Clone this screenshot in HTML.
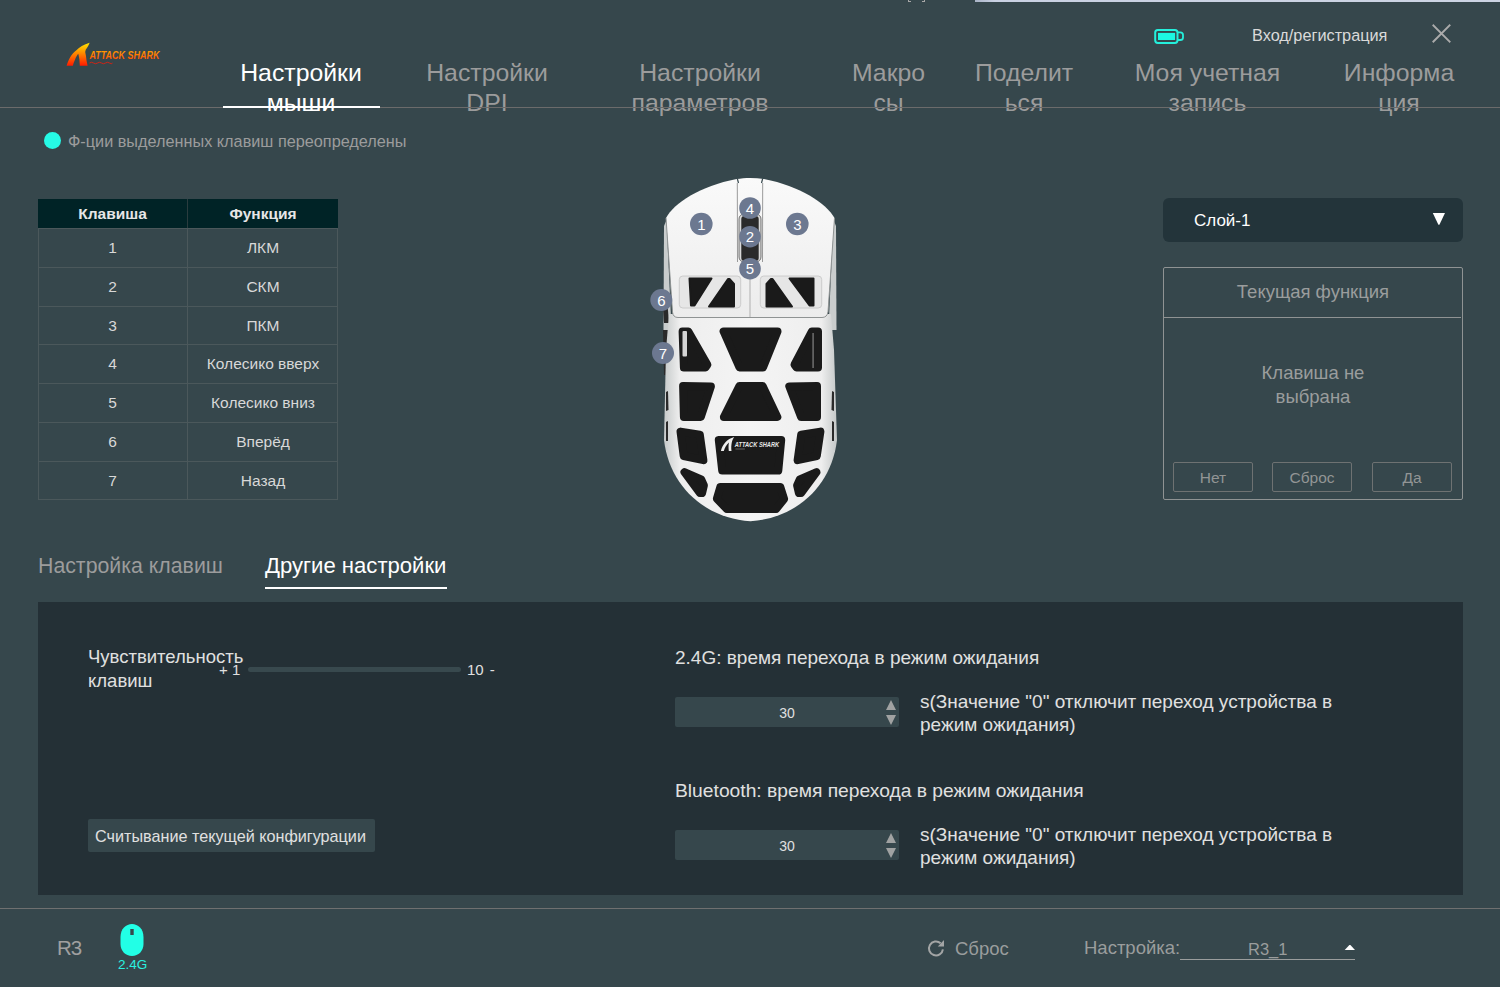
<!DOCTYPE html>
<html><head><meta charset="utf-8">
<style>
*{margin:0;padding:0;box-sizing:border-box}
html,body{width:1500px;height:987px;overflow:hidden;background:#36474c;font-family:"Liberation Sans",sans-serif}
.a{position:absolute;white-space:nowrap}
.tab{position:absolute;font-size:24.8px;line-height:29.4px;text-align:center;color:#9c9c9c;width:240px;white-space:nowrap}
.tab.on{color:#fff}
.th{height:29px;line-height:29px;text-align:center;color:#e6e6e6;font-weight:700;font-size:15.5px}
.td{text-align:center;color:#d8d8d8;font-size:15.5px}
.btn{position:absolute;border:1px solid #6e7272;border-radius:2px;width:80px;height:30px;color:#929595;font-size:15.5px;text-align:center;line-height:30px}
</style></head><body>
<!-- top strip -->
<div class="a" style="left:975px;top:0;width:525px;height:2px;background:linear-gradient(90deg,#a9b3c6 0,#c9d1e2 20px,#cdd4e3 100%)"></div>
<div class="a" style="left:908px;top:0;width:1px;height:2px;background:#a8a8a8"></div>
<div class="a" style="left:908px;top:1px;width:3px;height:1px;background:#a8a8a8"></div>
<div class="a" style="left:924px;top:0;width:1px;height:2px;background:#a8a8a8"></div>
<div class="a" style="left:922px;top:1px;width:3px;height:1px;background:#a8a8a8"></div>

<!-- logo -->
<svg class="a" style="left:60px;top:38px" width="110" height="32" viewBox="60 38 110 32">
 <defs><linearGradient id="lg" x1="0" y1="0" x2="0" y2="1"><stop offset="0" stop-color="#ffe600"/><stop offset="1" stop-color="#ff1a00"/></linearGradient>
 <linearGradient id="lg2" x1="0" y1="0" x2="0" y2="1"><stop offset="0" stop-color="#ffb000"/><stop offset="1" stop-color="#ff4a00"/></linearGradient></defs>
 <path d="M66.6,65.8 C68,60 72,53 76.1,50.4 C79,47.5 84,44.5 89.6,42.8 C88.8,45 87.5,47.5 85.7,49.7 L85.2,52 L85.9,55.5 C86.2,59 86.8,62.5 87.6,65.8 L79.8,65.8 L79.4,59.5 C79,57 78.6,55 78.2,53.8 C77,55.5 75.8,57.5 75.2,59.2 L73.8,62.6 L72.8,65.8 Z" fill="url(#lg)"/>
 <text x="89.5" y="58.5" font-family="Liberation Sans" font-weight="700" font-style="italic" font-size="11" fill="url(#lg2)" textLength="70" lengthAdjust="spacingAndGlyphs">ATTACK SHARK</text>
 <path d="M89.5,63 q2,-1.5 4,0 t4,0 t4,0 t4,0 t4,0 t3,0" stroke="#e02010" stroke-width="0.9" fill="none"/>
</svg>

<!-- nav tabs -->
<div class="tab on" style="left:181px;top:58.3px">Настройки<br>мыши</div>
<div class="tab" style="left:367px;top:58.3px">Настройки<br>DPI</div>
<div class="tab" style="left:580px;top:58.3px">Настройки<br>параметров</div>
<div class="tab" style="left:768.5px;top:58.3px">Макро<br>сы</div>
<div class="tab" style="left:904px;top:58.3px">Поделит<br>ься</div>
<div class="tab" style="left:1087.5px;top:58.3px">Моя учетная<br>запись</div>
<div class="tab" style="left:1279px;top:58.3px">Информа<br>ция</div>
<div class="a" style="left:0;top:107px;width:1500px;height:1px;background:#6b6b6b"></div>
<div class="a" style="left:223px;top:106px;width:157px;height:2px;background:#fff"></div>

<!-- battery / login / close -->
<svg class="a" style="left:1152px;top:27px" width="34" height="20" viewBox="0 0 34 20">
 <rect x="3.2" y="2.9" width="22.3" height="13" rx="2.6" fill="none" stroke="#24f0dc" stroke-width="2"/>
 <rect x="6" y="5.9" width="17.1" height="7.1" fill="#1cf8e2"/>
 <path d="M25.5,5.3 L28.3,5.3 Q31,5.3 31,8 L31,10.4 Q31,13 28.3,13 L25.5,13" stroke="#24f0dc" stroke-width="1.8" fill="none"/>
</svg>
<div class="a" style="left:1252px;top:27px;font-size:16.3px;line-height:16px;color:#dadada">Вход/регистрация</div>
<svg class="a" style="left:1430px;top:22px" width="24" height="24" viewBox="0 0 24 24">
 <path d="M3.4,3.4 L19.6,19.6 M19.6,3.4 L3.4,19.6" stroke="#ababab" stroke-width="1.9" stroke-linecap="square"/>
</svg>

<!-- indicator -->
<div class="a" style="left:44px;top:132px;width:17px;height:17px;border-radius:50%;background:#26fae6"></div>
<div class="a" style="left:68px;top:133px;font-size:16.25px;line-height:16px;color:#9c9c9c">Ф-ции выделенных клавиш переопределены</div>

<!-- table -->
<div class="a" style="left:38px;top:199px;width:300px;height:29px;background:#002326"></div>
<div class="a" style="left:187px;top:199px;width:1px;height:29px;background:#2a3c3e"></div>
<div class="a th" style="left:38px;top:199px;width:149px">Клавиша</div>
<div class="a th" style="left:188px;top:199px;width:150px">Функция</div>
<div class="a" style="left:38px;top:228px;width:300px;height:1px;background:#4b585b"></div>
<div class="a" style="left:38px;top:267px;width:300px;height:1px;background:#4b585b"></div>
<div class="a" style="left:38px;top:306px;width:300px;height:1px;background:#4b585b"></div>
<div class="a" style="left:38px;top:344px;width:300px;height:1px;background:#4b585b"></div>
<div class="a" style="left:38px;top:383px;width:300px;height:1px;background:#4b585b"></div>
<div class="a" style="left:38px;top:422px;width:300px;height:1px;background:#4b585b"></div>
<div class="a" style="left:38px;top:461px;width:300px;height:1px;background:#4b585b"></div>
<div class="a" style="left:38px;top:499px;width:300px;height:1px;background:#4b585b"></div>
<div class="a" style="left:38px;top:228px;width:1px;height:272px;background:#4b585b"></div>
<div class="a" style="left:187px;top:228px;width:1px;height:272px;background:#4b585b"></div>
<div class="a" style="left:337px;top:228px;width:1px;height:272px;background:#4b585b"></div>
<div class="a td" style="left:38px;top:229px;width:149px;height:38px;line-height:38px">1</div>
<div class="a td" style="left:188px;top:229px;width:150px;height:38px;line-height:38px">ЛКМ</div>
<div class="a td" style="left:38px;top:268px;width:149px;height:38px;line-height:38px">2</div>
<div class="a td" style="left:188px;top:268px;width:150px;height:38px;line-height:38px">СКМ</div>
<div class="a td" style="left:38px;top:307px;width:149px;height:37px;line-height:37px">3</div>
<div class="a td" style="left:188px;top:307px;width:150px;height:37px;line-height:37px">ПКМ</div>
<div class="a td" style="left:38px;top:345px;width:149px;height:38px;line-height:38px">4</div>
<div class="a td" style="left:188px;top:345px;width:150px;height:38px;line-height:38px">Колесико вверх</div>
<div class="a td" style="left:38px;top:384px;width:149px;height:38px;line-height:38px">5</div>
<div class="a td" style="left:188px;top:384px;width:150px;height:38px;line-height:38px">Колесико вниз</div>
<div class="a td" style="left:38px;top:423px;width:149px;height:38px;line-height:38px">6</div>
<div class="a td" style="left:188px;top:423px;width:150px;height:38px;line-height:38px">Вперёд</div>
<div class="a td" style="left:38px;top:462px;width:149px;height:37px;line-height:37px">7</div>
<div class="a td" style="left:188px;top:462px;width:150px;height:37px;line-height:37px">Назад</div>

<!-- MOUSE -->
<svg class="a" style="left:640px;top:170px" width="220" height="360" viewBox="640 170 220 360">
 <defs>
  <linearGradient id="mg" x1="0" y1="0" x2="1" y2="0">
   <stop offset="0" stop-color="#c6caca"/><stop offset="0.09" stop-color="#eeeeee"/><stop offset="0.5" stop-color="#f4f4f4"/><stop offset="0.91" stop-color="#eeeeee"/><stop offset="1" stop-color="#c4c8c8"/>
  </linearGradient>
  <linearGradient id="bg1" x1="0" y1="0" x2="0" y2="1">
   <stop offset="0" stop-color="#fafafa"/><stop offset="1" stop-color="#ececec"/>
  </linearGradient>
 </defs>
 <!-- side strips -->
 <path d="M664,226 L666.5,220 L671,318 L668,330 L663.5,330 Z" fill="#c9cdcd"/>
 <path d="M836,226 L833.5,220 L829,318 L832,330 L836.5,330 Z" fill="#c9cdcd"/>
 <!-- side buttons dark -->
 <path d="M662.5,300 L667,298 L669,323 L664,323 Z" fill="#2a2a2a"/>
 <path d="M663,330 L668,330 L668,375 L664,375 Z" fill="#2a2a2a"/>
 <!-- lower shell -->
 <path d="M669,314 L831,314 L834,350 L837,440 C831.6,485.4 797.3,518 750.5,521.3 C703.7,518 669.4,485.4 664,440 L666,350 Z" fill="url(#mg)"/>
 <!-- buttons -->
 <path d="M666,218 C674,203 700,186 736.7,179 C745,177.5 755,177.5 764,179 C800,186 826,203 834.5,218 L828,312 Q827,317.5 822,317.5 L678,317.5 Q673,317.5 672.5,312 Z" fill="url(#bg1)"/>
 <path d="M666,218 L672.5,312 Q673,317.5 678,317.5 L822,317.5 Q827,317.5 828,312 L834.5,218" stroke="#8f9393" stroke-width="1" fill="none"/>
 <path d="M737.3,178.5 L738.5,183 M762.7,178.5 L761.5,183" stroke="#36474c" stroke-width="1.2"/>
 <!-- wheel channel -->
 <path d="M737.3,183 L737.5,262 M762.7,183 L762.5,262" stroke="#9a9a9a" stroke-width="1" fill="none"/>
 <rect x="739" y="214" width="22" height="48" rx="5" fill="#d8d8d8" stroke="#555" stroke-width="0.8"/>
 <rect x="741.3" y="216" width="17.4" height="45" rx="3" fill="#2a2a2a"/>
 <path d="M750,272 L750,317" stroke="#a8a8a8" stroke-width="0.9"/>
 <!-- button holes -->
 <rect x="679.3" y="276" width="61.4" height="32" rx="3.5" fill="#e6e6e6" stroke="#c4c4c4" stroke-width="0.8"/>
 <rect x="760.3" y="276" width="61.4" height="32" rx="3.5" fill="#e6e6e6" stroke="#c4c4c4" stroke-width="0.8"/>
 <g fill="#1a1a1a" stroke="#1a1a1a" stroke-width="2" stroke-linejoin="round">
  <path d="M689.5,278.5 L711.5,278.5 L694.5,305.5 L691,305.5 Z"/>
  <path d="M728,279 L729.5,279 L734,284 L734,306.5 L709,306.5 Z"/>
  <path d="M771,279 L772.5,279 L792,306.5 L766.5,306.5 L766.5,284 Z"/>
  <path d="M789.5,278.5 L813.5,278.5 L813.5,305.5 L809.5,305.5 Z"/>
 </g>
 <!-- lower holes -->
 <g fill="#1a1a1a" stroke="#1a1a1a" stroke-width="8.0" stroke-linejoin="round">
  <path d="M682.6,331.5 L688.3,331.5 L707.4,364.8 L705.5,367.5 L683.9,367.5 Z"/>
  <path d="M723.6,331.5 L777.5,331.5 L763.0,367.5 L739.5,367.5 Z"/>
  <path d="M811.8,331.5 L818.0,331.5 L818.0,367.5 L796.5,367.5 L794.5,364.7 Z"/>
  <path d="M683.1,386.0 L710.9,386.4 L700.8,417.0 L683.9,417.0 Z"/>
  <path d="M739.4,386.0 L762.6,386.0 L777.3,417.0 L723.9,417.0 Z"/>
  <path d="M789.3,386.4 L817.0,386.0 L817.0,417.0 L801.1,417.0 Z"/>
  <path d="M680.5,431.6 L699.8,434.6 L703.4,460.2 L683.7,456.0 Z"/>
  <path d="M718.8,440.0 L781.2,440.0 L778.3,470.5 L722.2,470.5 Z"/>
  <path d="M801.2,434.6 L820.4,431.6 L816.8,456.0 L797.6,460.2 Z"/>
  <path d="M684.5,472.1 L701.2,479.3 L703.9,485.3 L702.1,493.0 L700.0,493.0 Z"/>
  <path d="M720.3,487.0 L780.3,487.0 L784.1,498.9 L776.1,509.0 L726.8,509.0 L716.9,498.7 Z"/>
  <path d="M799.8,479.3 L816.5,472.1 L801.0,493.0 L798.9,493.0 L797.1,485.3 Z"/>
 </g>
 <rect x="682.5" y="331" width="4.5" height="25.5" rx="1" fill="#d4d4d4"/>
 <rect x="812.3" y="333" width="1.6" height="35" fill="#6a6a6a"/>
 <g fill="#2a2a2a">
  <path d="M666,392 L668,391 L668.5,410 L666,411 Z"/>
  <path d="M666,422 L668,421 L668,441 L666,441 Z"/>
  <path d="M834,392 L832,391 L831.5,410 L834,411 Z"/>
  <path d="M834,422 L832,421 L832,441 L834,441 Z"/>
 </g>
 <!-- logo on plate -->
 <path d="M720.9,451 C722.5,444.5 727,439 734.2,437.1 C732,440 730.8,445 731.5,451 L728.8,451 C728.5,448 728.3,445 729,442.5 C726.5,444.5 724.8,447.5 723.8,451 Z" fill="#eeeeee"/>
 <text x="734.8" y="446.6" font-family="Liberation Sans" font-weight="700" font-style="italic" font-size="7.5" fill="#e6e6e6" textLength="44.3" lengthAdjust="spacingAndGlyphs">ATTACK SHARK</text>
 <rect x="735.4" y="448.6" width="9.5" height="0.8" fill="#777"/>
 <!-- badges -->
 <g fill="#6c7890">
  <circle cx="701.3" cy="224" r="11.3"/>
  <circle cx="797.3" cy="224" r="11.3"/>
  <circle cx="750" cy="208" r="10.8"/>
  <circle cx="750" cy="236.7" r="10.8"/>
  <circle cx="750" cy="268.7" r="10.8"/>
  <circle cx="661.3" cy="300" r="11"/>
  <circle cx="663" cy="353" r="11"/>
 </g>
 <g font-family="Liberation Sans" font-size="15" fill="#fff" text-anchor="middle">
  <text x="701.3" y="229.5">1</text>
  <text x="797.3" y="229.5">3</text>
  <text x="750" y="213.5">4</text>
  <text x="750" y="242.2">2</text>
  <text x="750" y="274.2">5</text>
  <text x="661.3" y="305.5">6</text>
  <text x="663" y="358.5">7</text>
 </g>
</svg>
<!-- layer dropdown -->
<div class="a" style="left:1163px;top:198px;width:300px;height:44px;border-radius:6px;background:#23343a"></div>
<div class="a" style="left:1194px;top:211.5px;font-size:17px;line-height:17px;color:#fff">Слой-1</div>
<svg class="a" style="left:1432px;top:212px" width="14" height="14" viewBox="0 0 14 14"><path d="M0.8,1 L13,1 L7.4,12.7 L6.4,12.7 Z" fill="#fff"/></svg>

<!-- current function box -->
<div class="a" style="left:1163px;top:267px;width:300px;height:233px;border:1px solid #8f9393;border-radius:2px"></div>
<div class="a" style="left:1164px;top:317px;width:297px;height:1px;background:#8f9393"></div>
<div class="a" style="left:1163px;top:283px;width:300px;text-align:center;font-size:18.5px;line-height:18.5px;color:#9a9d9d">Текущая функция</div>
<div class="a" style="left:1163px;top:361px;width:300px;text-align:center;font-size:18.5px;line-height:23.5px;color:#9a9d9d;white-space:normal">Клавиша не<br>выбрана</div>
<div class="btn" style="left:1173px;top:462px">Нет</div>
<div class="btn" style="left:1272px;top:462px">Сброс</div>
<div class="btn" style="left:1372px;top:462px">Да</div>

<!-- sub tabs -->
<div class="a" style="left:38px;top:556px;font-size:21.3px;line-height:21.3px;color:#9c9c9c">Настройка клавиш</div>
<div class="a" style="left:265px;top:555px;font-size:22.1px;line-height:21.3px;color:#fff">Другие настройки</div>
<div class="a" style="left:265px;top:587px;width:182px;height:2px;background:#fff"></div>

<!-- panel -->
<div class="a" style="left:38px;top:602px;width:1425px;height:293px;background:#243036"></div>
<div class="a" style="left:88px;top:645px;font-size:18.5px;line-height:24.4px;color:#e0e0e0">Чувствительность<br>клавиш</div>
<div class="a" style="left:219px;top:662px;font-size:15px;line-height:15px;color:#e0e0e0">+ 1</div>
<div class="a" style="left:248px;top:667px;width:213px;height:5px;border-radius:3px;background:#38494e"></div>
<div class="a" style="left:467px;top:662px;font-size:15px;line-height:15px;word-spacing:2px;color:#e0e0e0">10 -</div>

<div class="a" style="left:88px;top:819px;width:287px;height:33px;border-radius:2px;background:#36474c"></div>
<div class="a" style="left:95px;top:828px;font-size:16.2px;line-height:16.2px;color:#e0e0e0">Считывание текущей конфигурации</div>

<div class="a" style="left:675px;top:648px;font-size:19px;line-height:19px;color:#e0e0e0">2.4G: время перехода в режим ожидания</div>
<div class="a" style="left:675px;top:697px;width:224px;height:30px;border-radius:2px;background:#36474c"></div>
<div class="a" style="left:675px;top:706px;width:224px;text-align:center;font-size:14px;line-height:14px;color:#e0e0e0">30</div>
<svg class="a" style="left:884px;top:699px" width="14" height="28" viewBox="0 0 14 28"><path d="M2,11 L12,11 L7,1 Z M2,16 L12,16 L7,26 Z" fill="#a0a2a2"/></svg>
<div class="a" style="left:920px;top:689.5px;font-size:19px;line-height:23px;color:#e0e0e0">s(Значение "0" отключит переход устройства в<br>режим ожидания)</div>

<div class="a" style="left:675px;top:781px;font-size:19.25px;line-height:19px;color:#e0e0e0">Bluetooth: время перехода в режим ожидания</div>
<div class="a" style="left:675px;top:830px;width:224px;height:30px;border-radius:2px;background:#36474c"></div>
<div class="a" style="left:675px;top:839px;width:224px;text-align:center;font-size:14px;line-height:14px;color:#e0e0e0">30</div>
<svg class="a" style="left:884px;top:832px" width="14" height="28" viewBox="0 0 14 28"><path d="M2,11 L12,11 L7,1 Z M2,16 L12,16 L7,26 Z" fill="#a0a2a2"/></svg>
<div class="a" style="left:920px;top:822.5px;font-size:19px;line-height:23px;color:#e0e0e0">s(Значение "0" отключит переход устройства в<br>режим ожидания)</div>

<!-- footer -->
<div class="a" style="left:0;top:908px;width:1500px;height:1px;background:#6f7070"></div>
<div class="a" style="left:57px;top:938.4px;font-size:20.5px;line-height:20.5px;letter-spacing:-1px;color:#a0a0a0">R3</div>
<svg class="a" style="left:118px;top:922px" width="28" height="36" viewBox="0 0 28 36">
 <path d="M14,2 C20,2 25.5,7 25.5,15 L25.5,22 C25.5,29 20.5,34 14,34 C7.5,34 2.5,29 2.5,22 L2.5,15 C2.5,7 8,2 14,2 Z" fill="#22ffe6"/>
 <rect x="12.3" y="7" width="3.4" height="6" fill="#36474c"/>
</svg>
<div class="a" style="left:118px;top:958px;font-size:13.5px;line-height:13.5px;color:#2af0e0">2.4G</div>

<svg class="a" style="left:926px;top:938px" width="20" height="20" viewBox="0 0 20 20">
 <path d="M14.6,5.2 A7,7 0 1 0 16.9,11.3" stroke="#a3a5a5" stroke-width="2" fill="none"/>
 <path d="M18,2 L18,8.4 L11.8,8.4 Z" fill="#a3a5a5"/>
</svg>
<div class="a" style="left:955px;top:940px;font-size:18.5px;line-height:18.5px;color:#9a9d9d">Сброс</div>
<div class="a" style="left:1084px;top:939px;font-size:18.5px;line-height:18.5px;color:#9a9d9d">Настройка:</div>
<div class="a" style="left:1248px;top:940.5px;font-size:16.5px;line-height:16.5px;color:#9a9d9d">R3_1</div>
<div class="a" style="left:1180px;top:959px;width:175px;height:1px;background:#9a9d9d"></div>
<svg class="a" style="left:1344px;top:944px" width="12" height="8" viewBox="0 0 12 8"><path d="M0.7,6 L11,6 L6.4,0.9 L5.4,0.9 Z" fill="#fff"/></svg>

</body></html>
